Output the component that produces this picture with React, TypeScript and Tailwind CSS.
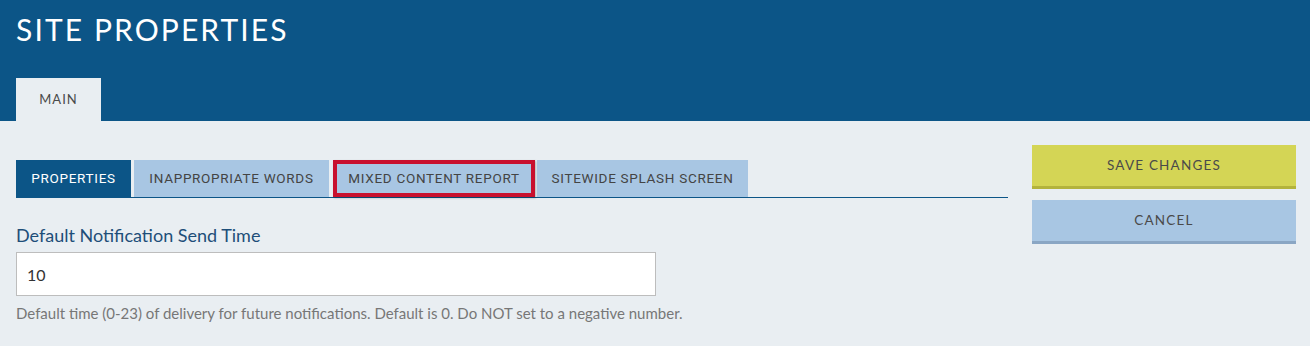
const subTabs = [
  { label: 'PROPERTIES', width: 'w-[115px] mr-[3px]', active: true },
  { label: 'INAPPROPRIATE WORDS', width: 'w-[195px] mr-[4px]' },
  { label: 'MIXED CONTENT REPORT', width: 'w-[202px] mr-[2px]', highlight: true },
  { label: 'SITEWIDE SPLASH SCREEN', width: 'w-[211px]' },
];

export default function App() {
  return (
    <div className="min-h-[346px] bg-[#e9eef2] font-['Lato',sans-serif]">
      <header className="bg-[#0c5587] px-4">
        <h1 className="pt-[12px] text-[30px] leading-[34px] tracking-[2.1px] text-white">SITE PROPERTIES</h1>
        <div className="mt-[32px] flex">
          <div className="flex h-[43px] w-[85px] items-center justify-center bg-[#e9eef2] text-[13px] tracking-[1px] text-[#4a4a4a]">
            MAIN
          </div>
        </div>
      </header>

      <main className="flex items-start gap-6 pl-4 pr-[14px]">
        <section className="flex-1 pt-[39px]">
          <div className="flex border-b-[1.5px] border-[#0c5587] font-['Roboto',sans-serif]">
            {subTabs.map((tab) => (
              <div
                key={tab.label}
                className={
                  'flex h-[37px] items-center justify-center text-[13.5px] tracking-[0.7px] ' +
                  tab.width +
                  ' ' +
                  (tab.active
                    ? 'bg-[#0c5587] text-white'
                    : tab.highlight
                    ? 'bg-[#a8c6e3] text-[#444] border-[4px] border-[#c8102e] shadow-[1px_1px_2px_rgba(0,0,0,0.25)]'
                    : 'bg-[#a8c6e3] text-[#444]')
                }
              >
                {tab.label}
              </div>
            ))}
          </div>

          <label className="mt-[25px] block text-[18px] leading-[24px] text-[#1e4e79]">Default Notification Send Time</label>
          <input
            defaultValue="10"
            className="mt-[5px] block h-[44px] w-[640px] border border-[#bdbdbd] bg-white px-[10px] text-[16px] text-[#333] outline-none"
          />
          <p className="mt-[6px] text-[15px] leading-[22px] text-[#777]">
            Default time (0-23) of delivery for future notifications. Default is 0. Do NOT set to a negative number.
          </p>
        </section>

        <aside className="flex w-[264px] flex-col gap-[11px] pt-[24px]">
          <button className="h-[44px] border-b-[3px] border-[#b3b33c] bg-[#d4d555] text-[13.5px] tracking-[1.2px] text-[#4a4a4a]">
            SAVE CHANGES
          </button>
          <button className="h-[44px] border-b-[3px] border-[#8aa6c4] bg-[#a8c6e3] text-[13.5px] tracking-[1.2px] text-[#4a4a4a]">
            CANCEL
          </button>
        </aside>
      </main>
    </div>
  );
}
